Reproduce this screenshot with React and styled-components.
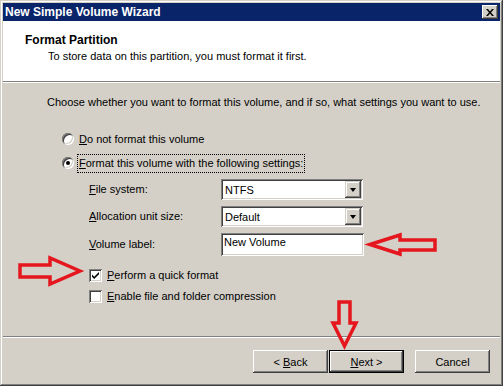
import React from "react"
import styled, { createGlobalStyle } from "styled-components"

const GlobalStyle = createGlobalStyle`
  html, body {
    margin: 0;
    padding: 0;
    background: #d4d0c8;
  }
  body {
    font-family: "Liberation Sans", Arial, sans-serif;
    font-size: 11px;
    color: #000;
  }
`

const Window = styled.div`
  position: relative;
  box-sizing: border-box;
  width: 503px;
  height: 386px;
  padding: 3px;
  background: #d4d0c8;
  display: flex;
  flex-direction: column;
  box-shadow: inset -1px -1px #404040, inset 1px 1px #d4d0c8,
    inset -2px -2px #808080, inset 2px 2px #fff;
`

const TitleBar = styled.div`
  height: 18px;
  flex: none;
  background: #0a246a;
  color: #fff;
  font-weight: bold;
  font-size: 12px;
  display: flex;
  align-items: center;
  justify-content: space-between;
  padding: 0 2px 0 2px;
`

const CloseBox = styled.div`
  width: 16px;
  height: 14px;
  background: #d4d0c8;
  box-sizing: border-box;
  display: flex;
  align-items: center;
  justify-content: center;
  box-shadow: inset -1px -1px #404040, inset 1px 1px #fff,
    inset -2px -2px #808080;
`

const Header = styled.div`
  height: 60px;
  flex: none;
  background: #fff;
  box-sizing: border-box;
  padding: 12px 0 0 22px;
`

const HeaderTitle = styled.div`
  font-weight: bold;
  font-size: 12px;
  line-height: 14px;
`

const HeaderSub = styled.div`
  margin: 3px 0 0 23px;
  line-height: 13px;
`

const Divider = styled.div`
  height: 0;
  flex: none;
  border-top: 1px solid #808080;
  border-bottom: 1px solid #fff;
`

const Body = styled.div`
  height: 253px;
  flex: none;
  box-sizing: border-box;
  padding: 13px 0 0 44px;
  display: flex;
  flex-direction: column;
`

const Intro = styled.div`
  line-height: 13px;
  height: 13px;
  margin-bottom: 20px;
`

const Option = styled.div`
  display: flex;
  align-items: center;
  height: 20px;
  margin-left: ${p => p.$indent || 0}px;
  margin-bottom: ${p => p.$gap || 0}px;
  gap: 5px;
`

const Radio = styled.span`
  width: 12px;
  height: 12px;
  flex: none;
  border-radius: 50%;
  background: #fff;
  box-sizing: border-box;
  display: flex;
  align-items: center;
  justify-content: center;
  box-shadow: inset 1px 1px #808080, inset -1px -1px #fff,
    inset 2px 2px #404040, inset -2px -2px #d4d0c8;
  &::after {
    content: "";
    width: 4px;
    height: 4px;
    border-radius: 50%;
    background: ${p => (p.$on ? "#000" : "transparent")};
  }
`

const OptionText = styled.span`
  line-height: 13px;
  padding: 2px 1px;
  border: 1px dotted ${p => (p.$focus ? "#000" : "transparent")};
  margin-left: -2px;
`

const Grid = styled.div`
  display: grid;
  grid-template-columns: 132px 142px;
  grid-template-rows: 21px 21px 23px;
  row-gap: 6px;
  margin: 6px 0 9px 42px;
  align-items: center;
`

const Label = styled.span`
  line-height: 13px;
`

const Combo = styled.div`
  height: 21px;
  box-sizing: border-box;
  background: #fff;
  display: flex;
  align-items: center;
  justify-content: space-between;
  padding: 2px 2px 2px 4px;
  box-shadow: inset 1px 1px #808080, inset -1px -1px #fff,
    inset 2px 2px #404040, inset -2px -2px #d4d0c8;
`

const ComboArrow = styled.div`
  width: 16px;
  height: 17px;
  box-sizing: border-box;
  background: #d4d0c8;
  display: flex;
  align-items: center;
  justify-content: center;
  box-shadow: inset -1px -1px #404040, inset 1px 1px #d4d0c8,
    inset -2px -2px #808080, inset 2px 2px #fff;
  &::after {
    content: "";
    border-left: 3.5px solid transparent;
    border-right: 3.5px solid transparent;
    border-top: 4px solid #000;
  }
`

const TextBox = styled.div`
  height: 23px;
  width: 143px;
  box-sizing: border-box;
  background: #fff;
  padding: 3px 3px;
  line-height: 13px;
  box-shadow: inset 1px 1px #808080, inset -1px -1px #fff,
    inset 2px 2px #404040, inset -2px -2px #d4d0c8;
`

const Check = styled.span`
  width: 13px;
  height: 13px;
  flex: none;
  background: #fff;
  display: flex;
  align-items: center;
  justify-content: center;
  box-shadow: inset 1px 1px #808080, inset -1px -1px #fff,
    inset 2px 2px #404040, inset -2px -2px #d4d0c8;
`

const Footer = styled.div`
  flex: 1;
  display: flex;
  justify-content: flex-end;
  align-items: flex-start;
  padding: 12px 10px 0 0;
`

const Button = styled.button`
  width: 75px;
  height: 23px;
  margin-left: ${p => p.$gap || 0}px;
  font-family: "Liberation Sans", Arial, sans-serif;
  font-size: 11px;
  color: #000;
  background: #d4d0c8;
  border: ${p => (p.$default ? "1px solid #000" : "none")};
  box-sizing: border-box;
  padding: 0;
  box-shadow: inset -1px -1px #404040, inset 1px 1px #fff,
    inset -2px -2px #808080, inset 2px 2px #d4d0c8;
`

const Overlay = styled.svg`
  position: absolute;
  left: 0;
  top: 0;
  pointer-events: none;
`

const U = styled.span`
  text-decoration: underline;
`

const options = [
  { key: "File system:", value: "NTFS" },
  { key: "Allocation unit size:", value: "Default" },
]

function Accel({ text }) {
  return (
    <>
      <U>{text[0]}</U>
      {text.slice(1)}
    </>
  )
}

export default function App() {
  return (
    <>
      <GlobalStyle />
      <Window>
        <TitleBar>
          <span>New Simple Volume Wizard</span>
          <CloseBox>
            <svg width="8" height="7" viewBox="0 0 8 7">
              <path d="M0 0h2l2 2.5L6 0h2L5 3.5 8 7H6L4 4.5 2 7H0l3-3.5z" fill="#000" />
            </svg>
          </CloseBox>
        </TitleBar>
        <Header>
          <HeaderTitle>Format Partition</HeaderTitle>
          <HeaderSub>To store data on this partition, you must format it first.</HeaderSub>
        </Header>
        <Divider />
        <Body>
          <Intro>Choose whether you want to format this volume, and if so, what settings you want to use.</Intro>
          <Option $indent={15} $gap={4}>
            <Radio />
            <OptionText><Accel text="Do not format this volume" /></OptionText>
          </Option>
          <Option $indent={15}>
            <Radio $on />
            <OptionText $focus><Accel text="Format this volume with the following settings:" /></OptionText>
          </Option>
          <Grid>
            {options.map(o => (
              <React.Fragment key={o.key}>
                <Label><Accel text={o.key} /></Label>
                <Combo>
                  <span>{o.value}</span>
                  <ComboArrow />
                </Combo>
              </React.Fragment>
            ))}
            <Label><Accel text="Volume label:" /></Label>
            <TextBox>New Volume</TextBox>
          </Grid>
          <Option $indent={42} $gap={1}>
            <Check>
              <svg width="9" height="9" viewBox="0 0 9 9">
                <path d="M1 3.5l2.2 2.3L8 1v2.3L3.2 8 1 5.8z" fill="#000" />
              </svg>
            </Check>
            <Label><Accel text="Perform a quick format" /></Label>
          </Option>
          <Option $indent={42}>
            <Check />
            <Label><Accel text="Enable file and folder compression" /></Label>
          </Option>
        </Body>
        <Divider />
        <Footer>
          <Button>&lt; <U>B</U>ack</Button>
          <Button $default $gap={1}><U>N</U>ext &gt;</Button>
          <Button $gap={11}>Cancel</Button>
        </Footer>
        <Overlay width="503" height="386" viewBox="0 0 503 386">
          <g fill="none" stroke="#e5161d" strokeWidth="3.5" strokeLinejoin="miter">
            <polygon points="370,244.5 400,235 400,240 435,240 435,250 400,250 400,254" />
            <polygon points="80,271 50,258 50,265 20,265 20,277 50,277 50,284" />
            <polygon points="344.5,346 356,323 350,323 350,302 339,302 339,323 333,323" />
          </g>
        </Overlay>
      </Window>
    </>
  )
}
